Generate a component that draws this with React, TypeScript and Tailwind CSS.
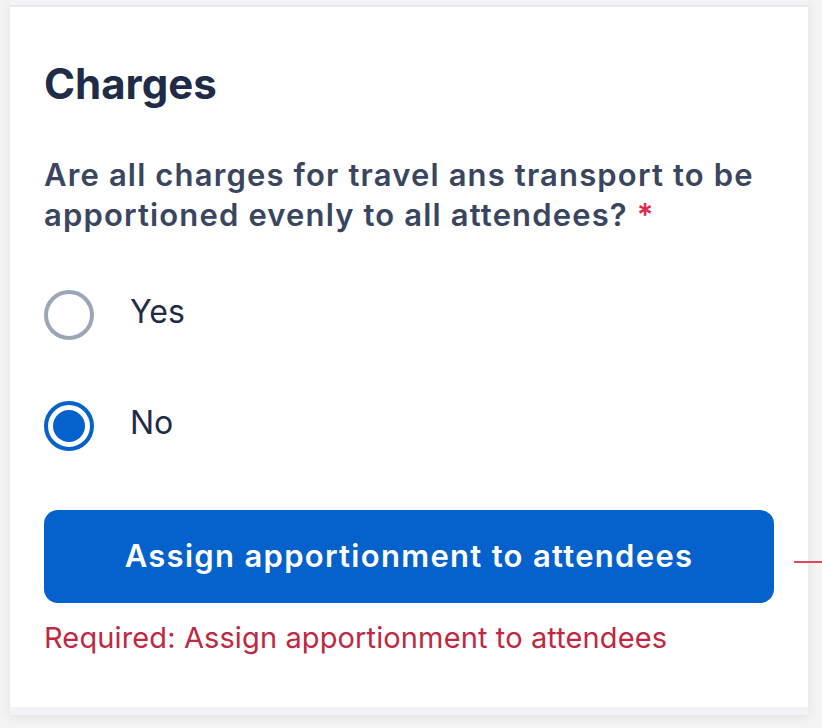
import React from "react";

export default function App() {
  return (
    <div
      className="relative w-[822px] h-[728px] overflow-hidden bg-[#f4f4f5]"
      style={{ fontFamily: "Inter, 'Noto Sans', sans-serif" }}
    >
      <div className="ml-[10px] w-[798px] shadow-[0_2px_12px_rgba(0,0,0,0.08)]">
        <div className="h-[7px] bg-[#f3f4f8] border-b-2 border-[#e6e9f1]" />
        <div className="bg-white pl-[34px] pr-[34px] pt-[53px] pb-[51px]">
          <h2 className="text-[42px] leading-[48px] font-bold text-[#1f2c47]">
            Charges
          </h2>
          <p className="mt-[47px] text-[31px] leading-[40px] font-semibold tracking-[1.15px] text-[#3a4660]">
            Are all charges for travel ans transport to be apportioned evenly to all attendees?{" "}
            <span className="text-[#e0294a]">*</span>
          </p>
          <div className="mt-[55px] flex flex-col gap-[61px]">
            <label className="flex items-center h-[50px]">
              <span className="w-[50px] h-[50px] rounded-full border-[4px] border-[#9ba6b9] bg-white shrink-0" />
              <span className="ml-[36px] -mt-[6px] text-[32px] leading-[40px] text-[#1f2c47]">Yes</span>
            </label>
            <label className="flex items-center h-[50px]">
              <span className="w-[50px] h-[50px] rounded-full border-[4px] border-[#0561cc] bg-white shrink-0 flex items-center justify-center">
                <span className="w-[32px] h-[32px] rounded-full bg-[#0561cc]" />
              </span>
              <span className="ml-[36px] -mt-[6px] text-[32px] leading-[40px] text-[#1f2c47]">No</span>
            </label>
          </div>
          <button className="mt-[59px] w-[730px] h-[93px] rounded-[14px] bg-[#0561cc] text-white text-[31px] font-semibold tracking-[1.3px] flex items-center justify-center">
            Assign apportionment to attendees
          </button>
          <p className="mt-[17px] text-[29px] leading-[36px] tracking-[0.12px] text-[#c0283f]">
            Required: Assign apportionment to attendees
          </p>
        </div>
        <div className="h-[8px] bg-[#f3f4f8]" />
      </div>
      <div className="absolute left-[794px] top-[561px] w-[28px] h-[2px] bg-[#e2455e]" />
    </div>
  );
}
